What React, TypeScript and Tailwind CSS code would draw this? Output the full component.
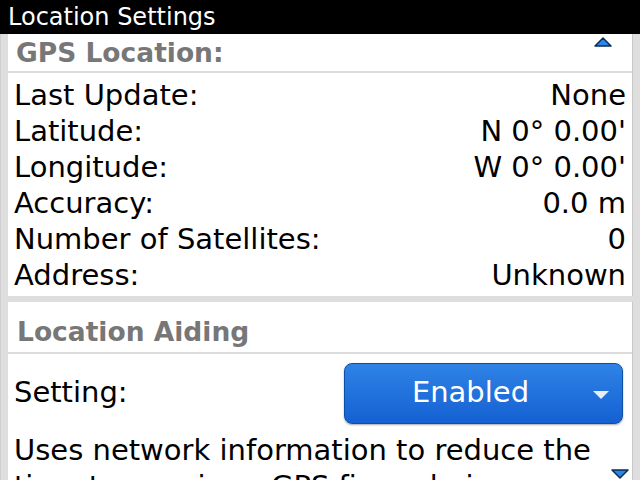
const rows: [string, string][] = [
  ["Last Update:", "None"],
  ["Latitude:", "N 0° 0.00'"],
  ["Longitude:", "W 0° 0.00'"],
  ["Accuracy:", "0.0 m"],
  ["Number of Satellites:", "0"],
  ["Address:", "Unknown"],
];

const font = { fontFamily: '"DejaVu Sans", Verdana, sans-serif' };

function ScrollArrow({ up }: { up: boolean }) {
  return (
    <svg width="18" height="10" viewBox="0 0 18 10">
      <polygon
        points={up ? "1,9 9,1 17,9" : "1,1 9,9 17,1"}
        fill="#2b86e6"
        stroke="#0b2b55"
        strokeWidth="1.5"
        strokeLinejoin="round"
      />
    </svg>
  );
}

export default function App() {
  return (
    <div
      className="w-[640px] h-[480px] overflow-hidden bg-[#dedede] flex flex-col relative"
      style={font}
    >
      <div className="h-[34px] shrink-0 bg-black text-white text-[24px] leading-[34px] pl-[8px]">
        Location Settings
      </div>

      <div className="flex-1 flex flex-col gap-[6px] pl-[7px] pr-[7px] border-l border-[#cfcfcf]">
        {/* GPS panel */}
        <div className="bg-white border-r border-[#c8c8c8]">
          <div className="h-[39px] border-b-2 border-[#dcdcdc] flex items-center pl-[8px] text-[26.5px] font-bold text-[#777777]">
            GPS Location:
          </div>
          <div className="pt-[5px] pb-[2px] px-[6px] text-[29px] text-black">
            {rows.map(([label, value]) => (
              <div key={label} className="h-[36px] flex items-center justify-between">
                <span>{label}</span>
                <span>{value}</span>
              </div>
            ))}
          </div>
        </div>

        {/* Location aiding panel */}
        <div className="bg-white border-r border-[#c8c8c8] flex-1">
          <div className="h-[52px] border-b-2 border-[#dcdcdc] flex items-center pl-[9px] pt-[10px] text-[26.5px] font-bold text-[#777777]">
            Location Aiding
          </div>
          <div className="flex items-center justify-between pl-[6px] pr-[9px] h-[78px] text-[29px] text-black">
            <span>Setting:</span>
            <div className="w-[279px] h-[61px] rounded-[8px] border border-[#0e4fa6] bg-gradient-to-b from-[#2f83e6] to-[#1560d2] shadow-[0_1px_2px_rgba(0,0,0,0.35)] flex items-center relative">
              <span className="flex-1 text-center text-white pr-[26px]">Enabled</span>
              <svg
                className="absolute right-[12px] top-[26px]"
                width="18"
                height="10"
                viewBox="0 0 18 10"
              >
                <polygon points="1,1 17,1 9,9" fill="#e8eef7" />
              </svg>
            </div>
          </div>
          <div className="px-[6px] text-[29px] leading-[36px] text-black whitespace-nowrap">
            <div>Uses network information to reduce the</div>
            <div>time to acquire a GPS fix and give you a</div>
          </div>
        </div>
      </div>

      <div className="absolute right-[28px] top-[37px]">
        <ScrollArrow up />
      </div>
      <div className="absolute right-[11px] top-[469px]">
        <ScrollArrow up={false} />
      </div>
    </div>
  );
}
